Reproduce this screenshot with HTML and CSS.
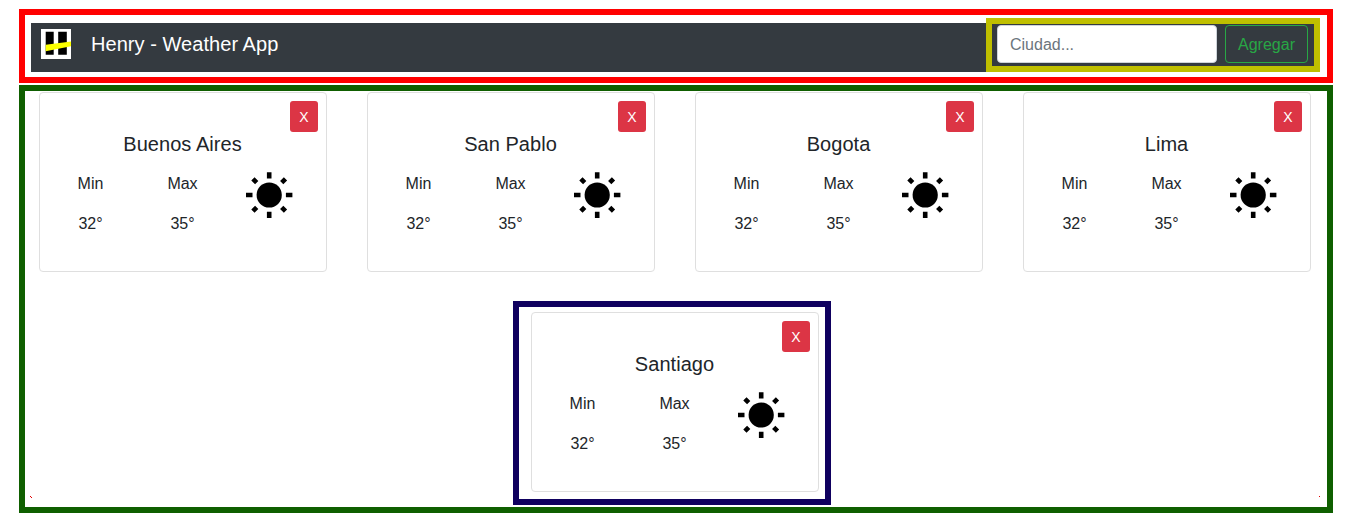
FILE: index.html
```html
<!DOCTYPE html>
<html lang="es">
<head>
<meta charset="utf-8">
<title>Henry - Weather App</title>
<link rel="stylesheet" href="styles.css">
</head>
<body>
<svg class="defs" width="0" height="0" aria-hidden="true">
  <symbol id="sun" viewBox="0 0 50 50">
    <circle cx="25.2" cy="25" r="12.6"/>
    <path d="M25.2 2.2v6.2M25.2 41.8v6.2M2 25h6.5M41.9 25h6.5" stroke="#000" stroke-width="4.6"/>
    <path d="M8.9 8.9l3.8 3.8M41.5 8.9l-3.8 3.8M8.9 41.1l3.8-3.8M41.5 41.1l-3.8-3.8" stroke="#000" stroke-width="4.6"/>
  </symbol>
</svg>
<header class="nav-frame">
  <nav class="navbar">
    <svg class="logo" viewBox="0 0 30 30">
      <rect width="30" height="30" fill="#fff"/>
      <path d="M4.7 2.8h8v23h-8zM17.2 2.8h8.6v23h-8.6z"/>
      <path d="M4.7 15.8L30 12.4v4.8L4.7 22.3z" fill="#fbff00"/>
    </svg>
    <span class="brand">Henry - Weather App</span>
    <form class="search">
      <input class="city-input" type="text" placeholder="Ciudad...">
      <button class="add" type="button">Agregar</button>
    </form>
  </nav>
</header>
<main class="cards-frame">
  <div class="cards">
    <article class="card">
      <button class="close">X</button>
      <h5 class="city">Buenos Aires</h5>
      <div class="row">
        <div class="col"><p>Min</p><p>32°</p></div>
        <div class="col"><p>Max</p><p>35°</p></div>
        <div class="col"><svg class="sun"><use href="#sun"/></svg></div>
      </div>
    </article>
    <article class="card">
      <button class="close">X</button>
      <h5 class="city">San Pablo</h5>
      <div class="row">
        <div class="col"><p>Min</p><p>32°</p></div>
        <div class="col"><p>Max</p><p>35°</p></div>
        <div class="col"><svg class="sun"><use href="#sun"/></svg></div>
      </div>
    </article>
    <article class="card">
      <button class="close">X</button>
      <h5 class="city">Bogota</h5>
      <div class="row">
        <div class="col"><p>Min</p><p>32°</p></div>
        <div class="col"><p>Max</p><p>35°</p></div>
        <div class="col"><svg class="sun"><use href="#sun"/></svg></div>
      </div>
    </article>
    <article class="card">
      <button class="close">X</button>
      <h5 class="city">Lima</h5>
      <div class="row">
        <div class="col"><p>Min</p><p>32°</p></div>
        <div class="col"><p>Max</p><p>35°</p></div>
        <div class="col"><svg class="sun"><use href="#sun"/></svg></div>
      </div>
    </article>
  </div>
  <div class="bottom">
    <i class="tick"></i>
    <div class="card-frame">
      <article class="card">
        <button class="close">X</button>
        <h5 class="city">Santiago</h5>
        <div class="row">
          <div class="col"><p>Min</p><p>32°</p></div>
          <div class="col"><p>Max</p><p>35°</p></div>
          <div class="col"><svg class="sun"><use href="#sun"/></svg></div>
        </div>
      </article>
    </div>
    <i class="tick tick-right"></i>
  </div>
</main>
</body>
</html>
```
FILE: styles.css
```css
* { box-sizing: border-box; }
body {
  margin: 0;
  padding: 9px 17px 0 19px;
  height: 520px;
  overflow: hidden;
  background: #fff;
  color: #212529;
  font: 16px/24px "Liberation Sans", Arial, sans-serif;
}
.defs { position: absolute; }
.nav-frame {
  height: 74px;
  border: 6px solid #f00;
  padding: 8px 7px 0 6px;
}
.navbar {
  display: flex;
  align-items: flex-start;
  height: 49px;
  padding-left: 10px;
  background: #343a40;
}
.logo { width: 30px; height: 30px; margin-top: 6px; }
.brand {
  margin: 6px auto 0 20px;
  color: #fff;
  font-size: 20px;
  line-height: 30px;
  letter-spacing: 0.05px;
}
.search {
  display: flex;
  gap: 8px;
  width: 334px;
  height: 54px;
  margin: -5px 0 0;
  padding: 1px 6px 0 5px;
  border: 6px solid #bfbf00;
  background: #343a40;
}
.city-input {
  width: 220px;
  height: 38px;
  padding: 7px 12px 5px;
  border: 1px solid #ced4da;
  border-radius: 4px;
  background: #fff;
  font: inherit;
}
.city-input::placeholder { color: #6c757d; opacity: 1; }
.add {
  width: 83px;
  height: 38px;
  padding: 1px 0 0;
  border: 1px solid #28a745;
  border-radius: 4px;
  background: transparent;
  color: #28a745;
  font: inherit;
}
.cards-frame {
  height: 428px;
  margin-top: 2px;
  padding-top: 1px;
  border: 6px solid #0f5f00;
}
.cards { display: flex; gap: 40px; padding-left: 14px; }
.card {
  display: flex;
  flex-direction: column;
  flex: none;
  width: 288px;
  height: 180px;
  padding: 8px 6px 0 4px;
  border: 1px solid #dfdfdf;
  border-radius: 4px;
  background: #fff;
}
.close {
  align-self: flex-end;
  width: 28px;
  height: 31px;
  margin-right: 2px;
  padding: 2px 0 0;
  border: 0;
  border-radius: 3px;
  background: #dc3545;
  color: #fff;
  font: 14px/21px "Liberation Sans", Arial, sans-serif;
}
.city {
  margin: 0 0 16px;
  padding-left: 1px;
  font-size: 20px;
  font-weight: 400;
  line-height: 24px;
  letter-spacing: 0.05px;
  text-align: center;
}
.row { display: grid; grid-template-columns: repeat(3, 92px); }
.col { padding-left: 1px; text-align: center; }
.col p { margin: 0 0 16px; }
.sun { display: block; width: 50px; height: 50px; margin: -2px 0 0 15px; }
.bottom {
  display: flex;
  justify-content: space-between;
  align-items: flex-start;
  margin-top: 29px;
  padding: 0 7px 0 5px;
}
.card-frame {
  width: 318px;
  height: 204px;
  padding: 5px 0 0 12px;
  border: 6px solid #0f005f;
  margin-right: 6px;
}
.tick {
  width: 1px;
  height: 1px;
  margin-top: 195px;
  background: #e00000;
  box-shadow: 1px 1px #e00000;
}
.tick-right { box-shadow: none; }
```
